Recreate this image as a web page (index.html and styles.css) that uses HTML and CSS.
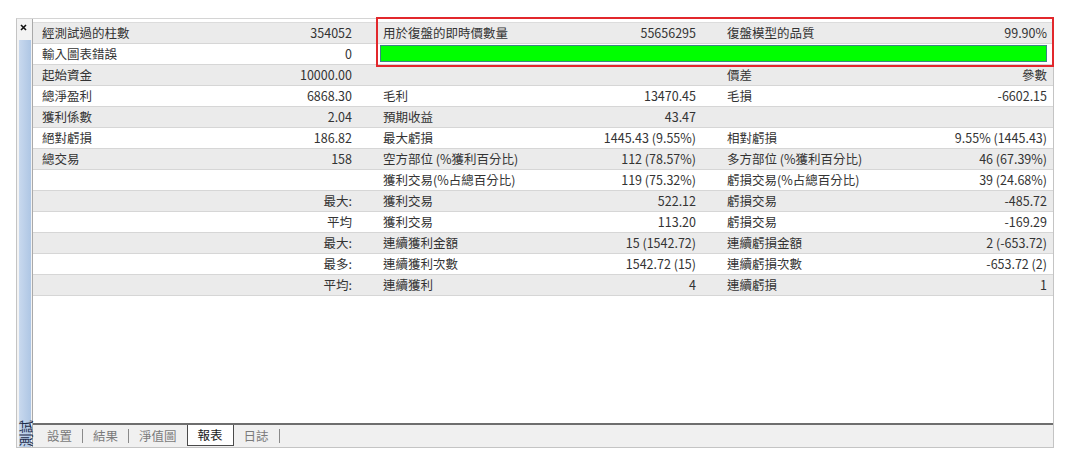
FILE: index.html
```
<!DOCTYPE html>
<html lang="zh-Hant">
<head>
  <meta charset="UTF-8" />
  <title>測試 - 報表</title>
  <link rel="stylesheet" href="styles.css">
</head>
<body>
  <div class="frame">
    <div class="side">
      <svg class="close" width="7" height="7" viewBox="0 0 7 7">
        <path d="M1 1 L6 6 M6 1 L1 6" stroke="#111" stroke-width="1.6" fill="none" />
      </svg>
      <div class="strip"><span class="vtext">測試</span></div>
    </div>

    <div class="pane">
      <div class="report">
        <div class="row">
          <div class="cell"><span>經測試過的柱數</span><span>354052</span></div>
          <div class="cell"><span>用於復盤的即時價數量</span><span>55656295</span></div>
          <div class="cell"><span>復盤模型的品質</span><span>99.90%</span></div>
        </div>
        <div class="row">
          <div class="cell"><span>輸入圖表錯誤</span><span>0</span></div>
          <div class="cell wide"><div class="quality"></div></div>
        </div>
        <div class="row">
          <div class="cell"><span>起始資金</span><span>10000.00</span></div>
          <div class="cell"></div>
          <div class="cell"><span>價差</span><span>參數</span></div>
        </div>
        <div class="row">
          <div class="cell"><span>總淨盈利</span><span>6868.30</span></div>
          <div class="cell"><span>毛利</span><span>13470.45</span></div>
          <div class="cell"><span>毛損</span><span>-6602.15</span></div>
        </div>
        <div class="row">
          <div class="cell"><span>獲利係數</span><span>2.04</span></div>
          <div class="cell"><span>預期收益</span><span>43.47</span></div>
          <div class="cell"></div>
        </div>
        <div class="row">
          <div class="cell"><span>絕對虧損</span><span>186.82</span></div>
          <div class="cell"><span>最大虧損</span><span>1445.43 (9.55%)</span></div>
          <div class="cell"><span>相對虧損</span><span>9.55% (1445.43)</span></div>
        </div>
        <div class="row">
          <div class="cell"><span>總交易</span><span>158</span></div>
          <div class="cell"><span>空方部位 (%獲利百分比)</span><span>112 (78.57%)</span></div>
          <div class="cell"><span>多方部位 (%獲利百分比)</span><span>46 (67.39%)</span></div>
        </div>
        <div class="row">
          <div class="cell"></div>
          <div class="cell"><span>獲利交易(%占總百分比)</span><span>119 (75.32%)</span></div>
          <div class="cell"><span>虧損交易(%占總百分比)</span><span>39 (24.68%)</span></div>
        </div>
        <div class="row">
          <div class="cell"><span></span><span>最大:</span></div>
          <div class="cell"><span>獲利交易</span><span>522.12</span></div>
          <div class="cell"><span>虧損交易</span><span>-485.72</span></div>
        </div>
        <div class="row">
          <div class="cell"><span></span><span>平均</span></div>
          <div class="cell"><span>獲利交易</span><span>113.20</span></div>
          <div class="cell"><span>虧損交易</span><span>-169.29</span></div>
        </div>
        <div class="row">
          <div class="cell"><span></span><span>最大:</span></div>
          <div class="cell"><span>連續獲利金額</span><span>15 (1542.72)</span></div>
          <div class="cell"><span>連續虧損金額</span><span>2 (-653.72)</span></div>
        </div>
        <div class="row">
          <div class="cell"><span></span><span>最多:</span></div>
          <div class="cell"><span>連續獲利次數</span><span>1542.72 (15)</span></div>
          <div class="cell"><span>連續虧損次數</span><span>-653.72 (2)</span></div>
        </div>
        <div class="row">
          <div class="cell"><span></span><span>平均:</span></div>
          <div class="cell"><span>連續獲利</span><span>4</span></div>
          <div class="cell"><span>連續虧損</span><span>1</span></div>
        </div>

        <div class="mark"></div>
      </div>

      <div class="tabs">
        <span class="tab split">設置</span>
        <span class="tab split">結果</span>
        <span class="tab">淨值圖</span>
        <span class="tab on">報表</span>
        <span class="tab split">日誌</span>
      </div>
    </div>
  </div>
</body>
</html>
```

FILE: styles.css
```
body {
  margin: 0;
  background: #fff;
  font-family: "Noto Sans CJK TC", "Noto Sans", sans-serif;
  font-size: 12.5px;
  color: #333;
}
.frame {
  display: flex;
  margin: 18px 0 0 16px;
  width: 1038px;
  height: 430px;
  box-sizing: border-box;
  border-top: 1px solid #d4d4d4;
  border-left: 1px solid #c4c4c4;
  border-bottom: 1px solid #c4c4c4;
}
.side {
  width: 15px;
  display: flex;
  flex-direction: column;
  background: #f3f3f3;
}
.close {
  display: block;
  margin: 5px 0 0 3px;
}
.strip {
  flex: 1;
  margin: 9px 0 0 2px;
  width: 12px;
  background: linear-gradient(90deg, #c9d9ee, #aec6e4);
  display: flex;
  flex-direction: column;
  justify-content: flex-end;
  align-items: center;
}
.vtext {
  writing-mode: vertical-rl;
  text-orientation: sideways;
  transform: rotate(180deg);
  font-size: 13.5px;
  line-height: 12px;
  color: #1c2b48;
  padding-bottom: 1px;
}
.pane {
  flex: 1;
  display: flex;
  flex-direction: column;
  border-left: 1px solid #a9a9a9;
  border-right: 1px solid #c4c4c4;
  padding-top: 3px;
}
.report {
  flex: 1;
  position: relative;
  border-top: 1px solid #dcdcdc;
}
.row {
  display: grid;
  grid-template-columns: 343px 344px 1fr;
  height: 20px;
  line-height: 20px;
  background: #ebebeb;
  border-bottom: 1px solid #d6d6d6;
}
.row:nth-child(even) {
  background: #fff;
}
.cell {
  display: flex;
  justify-content: space-between;
  padding: 0 24px 0 7px;
  white-space: nowrap;
}
.row .cell:first-child {
  padding-left: 9px;
}
.row .cell:last-child {
  padding-right: 6px;
}
.cell.wide {
  grid-column: span 2;
  padding: 1px 5px 2px 4px;
}
.quality {
  flex: 1;
  background: #00ff00;
  border: 1px solid #3b8585;
}
.mark {
  position: absolute;
  left: 343px;
  top: -6px;
  right: -1px;
  height: 50px;
  border: 2px solid #e2282c;
  box-sizing: border-box;
}
.tabs {
  height: 22px;
  display: flex;
  align-items: center;
  padding-left: 4px;
  background: #f0f0f0;
  border-top: 2px solid #6e6e6e;
  color: #7a7a7a;
}
.tab {
  padding: 0 10px;
  height: 14px;
  line-height: 14px;
}
.tab.split {
  border-right: 1px solid #8a8a8a;
}
.tab.on {
  align-self: flex-start;
  height: 21px;
  line-height: 20px;
  background: #fff;
  color: #1a1a1a;
  border: 1px solid #4a4a4a;
  border-top: none;
  box-sizing: border-box;
}
```
